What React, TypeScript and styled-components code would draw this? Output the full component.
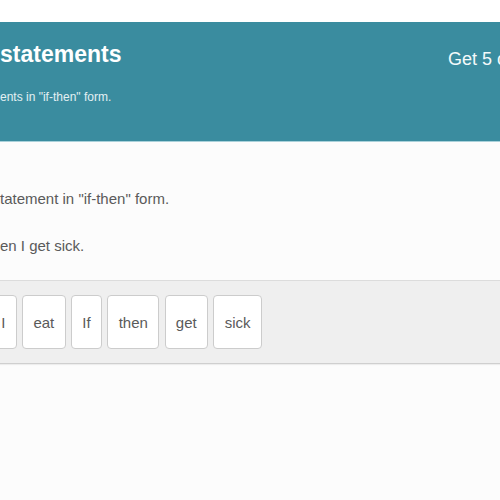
import React from "react";
import styled, { createGlobalStyle } from "styled-components";

const Global = createGlobalStyle`
  html, body { margin: 0; padding: 0; background: #fcfcfc; overflow: hidden; }
  body { font-family: "Liberation Sans", Arial, sans-serif; }
`;

const Page = styled.div`
  width: 500px;
  height: 500px;
  overflow: hidden;
  display: flex;
  flex-direction: column;
`;

const TopBar = styled.div`
  height: 22px;
  background: #ffffff;
  flex: 0 0 auto;
`;

const Header = styled.header`
  height: 120px;
  box-sizing: border-box;
  background: #3a8c9f;
  border-bottom: 1px solid #a9d1da;
  display: flex;
  flex: 0 0 auto;
  padding-top: 18px;
  white-space: nowrap;
`;

const TitleBlock = styled.div`
  flex: 0 0 448px;
  display: flex;
  flex-direction: column;
  gap: 21px;
`;

const Title = styled.h1`
  margin: 0;
  font-size: 23px;
  line-height: 28px;
  font-weight: 700;
  color: #ffffff;
`;

const Subtitle = styled.p`
  margin: 0;
  font-size: 12px;
  line-height: 16px;
  color: #e3f0f3;
`;

const Goal = styled.div`
  margin-top: 8px;
  font-size: 18px;
  line-height: 22px;
  color: #f4fafb;
`;

const Content = styled.main`
  padding-top: 47px;
  display: flex;
  flex-direction: column;
  gap: 27px;
`;

const Line = styled.p`
  margin: 0;
  font-size: 15px;
  line-height: 20px;
  color: #5a5a5a;
  white-space: nowrap;
`;

const Tray = styled.div`
  margin-top: 24px;
  background: #efefef;
  border-top: 1px solid #dcdcdc;
  border-bottom: 1px solid #cfcfcf;
  box-shadow: 0 1px 1px rgba(0, 0, 0, 0.06);
  padding: 14px 0;
`;

const TileRow = styled.div`
  display: flex;
  gap: 5.5px;
  margin-left: -10px;
`;

const Tile = styled.div`
  height: 54px;
  box-sizing: border-box;
  padding: 0 10.25px;
  background: #ffffff;
  border: 1px solid #cccccc;
  border-radius: 4px;
  display: flex;
  align-items: center;
  font-size: 15px;
  color: #5a5a5a;
`;

const words = ["I", "eat", "If", "then", "get", "sick"];

export default function App() {
  return (
    <Page>
      <Global />
      <TopBar />
      <Header>
        <TitleBlock>
          <Title>statements</Title>
          <Subtitle>ents in "if-then" form.</Subtitle>
        </TitleBlock>
        <Goal>Get 5 correct</Goal>
      </Header>
      <Content>
        <Line>tatement in "if-then" form.</Line>
        <Line>en I get sick.</Line>
      </Content>
      <Tray>
        <TileRow>
          {words.map((w) => (
            <Tile key={w}>{w}</Tile>
          ))}
        </TileRow>
      </Tray>
    </Page>
  );
}
